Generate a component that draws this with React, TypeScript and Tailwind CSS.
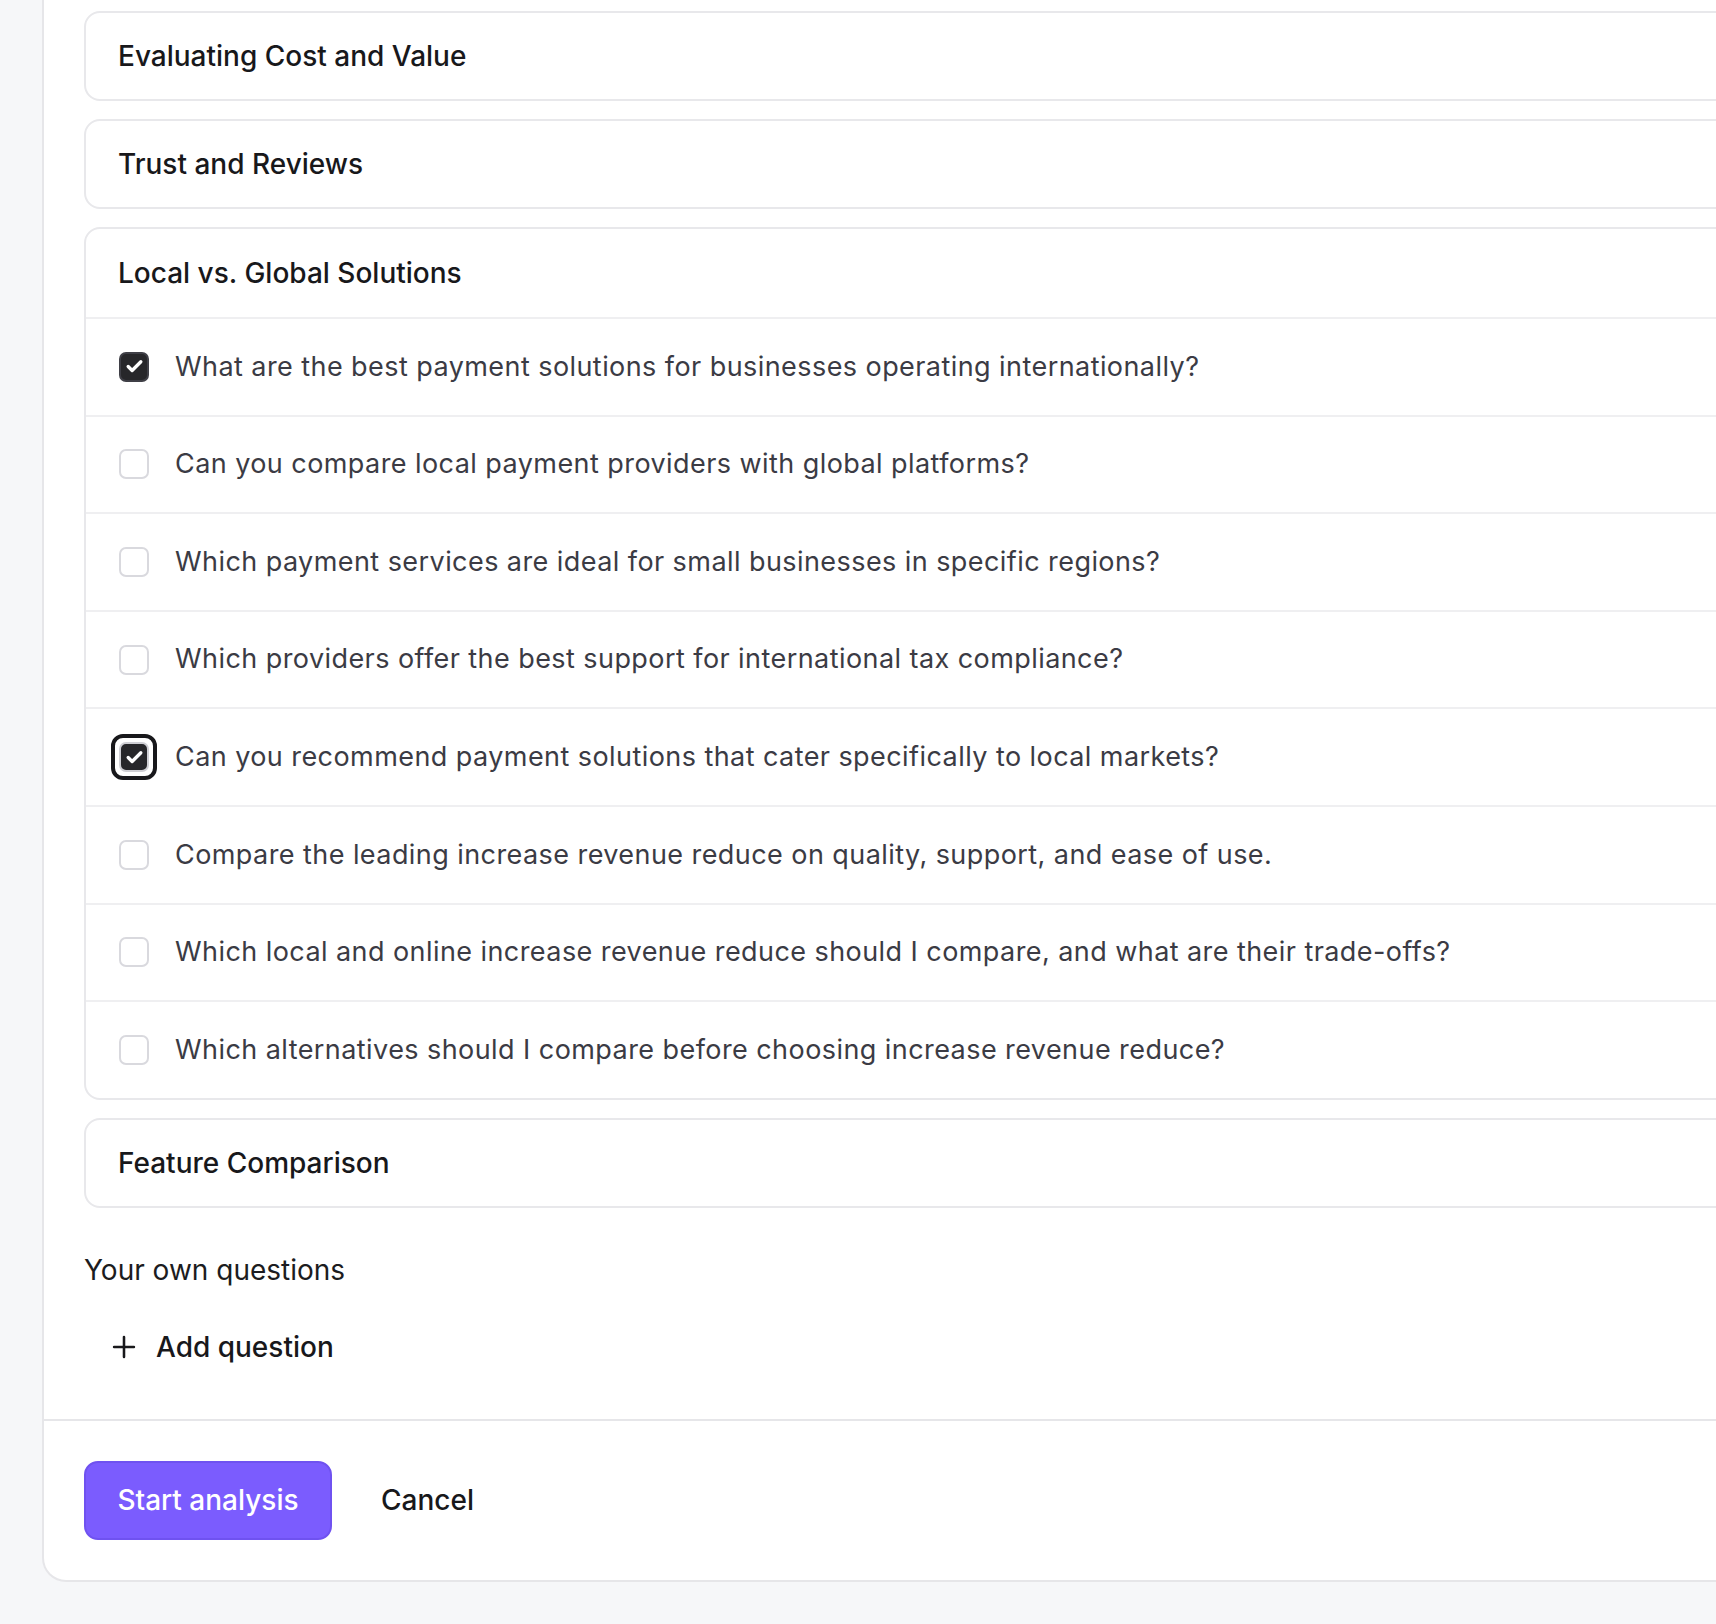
import { Check, Plus } from "lucide-react";

const questions = [
  { text: "What are the best payment solutions for businesses operating internationally?", checked: true },
  { text: "Can you compare local payment providers with global platforms?", checked: false },
  { text: "Which payment services are ideal for small businesses in specific regions?", checked: false },
  { text: "Which providers offer the best support for international tax compliance?", checked: false },
  { text: "Can you recommend payment solutions that cater specifically to local markets?", checked: true, focused: true },
  { text: "Compare the leading increase revenue reduce on quality, support, and ease of use.", checked: false },
  { text: "Which local and online increase revenue reduce should I compare, and what are their trade-offs?", checked: false },
  { text: "Which alternatives should I compare before choosing increase revenue reduce?", checked: false },
];

function Box({ checked, focused }: { checked: boolean; focused?: boolean }) {
  const box = (
    <span
      className={`flex h-[30px] w-[30px] shrink-0 items-center justify-center rounded-[7px] border-2 ${
        checked ? "border-[#3f3f46] bg-[#27272a]" : "border-[#d9d9de] bg-white"
      } ${focused ? "border-[#cfcfd4]" : ""}`}
    >
      {checked && <Check size={19} strokeWidth={4.2} className="text-white" />}
    </span>
  );
  if (!focused) return box;
  return (
    <span className="-m-[8px] flex shrink-0 rounded-[12px] border-[4px] border-[#18181b] p-[4px]">{box}</span>
  );
}

function Section({ title }: { title: string }) {
  return (
    <div className="flex h-[90px] items-center rounded-2xl border-2 border-[#e8e8eb] bg-white px-[32px]">
      <span className="text-[28px] font-medium text-[#18181b]">{title}</span>
    </div>
  );
}

export default function App() {
  return (
    <div
      className="min-h-[1624px] w-full overflow-hidden bg-[#f6f7f9]"
      style={{ fontFamily: "Inter, 'Noto Sans', sans-serif" }}
    >
      <div className="ml-[42px] w-[1780px] rounded-b-[24px] border-2 border-t-0 border-[#e6e6e9] bg-white">
        <div className="px-[40px] pt-[11px]">
          <div className="flex flex-col gap-[18px]">
            <Section title="Evaluating Cost and Value" />
            <Section title="Trust and Reviews" />

            {/* Open section */}
            <div className="rounded-2xl border-2 border-[#e8e8eb] bg-white">
              <div className="flex h-[88px] items-center px-[32px]">
                <span className="text-[28px] font-medium text-[#18181b]">Local vs. Global Solutions</span>
              </div>
              {questions.map((q) => (
                <label
                  key={q.text}
                  className="flex h-[97.6px] items-center gap-[26px] border-t-2 border-[#efeff1] px-[33px]"
                >
                  <Box checked={q.checked} focused={q.focused} />
                  <span className="text-[27px] tracking-[0.016em] text-[#3b3b44]">{q.text}</span>
                </label>
              ))}
            </div>

            <Section title="Feature Comparison" />
          </div>

          <h3 className="mt-[44px] text-[28px] leading-[36px] text-[#1c1c20]">Your own questions</h3>
          <button className="mt-[31px] flex h-[56px] items-center gap-[15px] pl-[23px] text-[28px] font-medium text-[#18181b]">
            <Plus size={34} strokeWidth={1.8} />
            Add question
          </button>
          <div className="h-[44px]" />
        </div>

        <div className="flex items-center gap-[49px] border-t-2 border-[#e6e6e9] px-[40px] pt-[40px] pb-[40px]">
          <button className="h-[79px] w-[248px] rounded-[14px] border-2 border-[#6f52f0] bg-[#7b5cfe] text-[28px] font-medium text-white">
            Start analysis
          </button>
          <button className="text-[28px] font-medium text-[#18181b]">Cancel</button>
        </div>
      </div>
    </div>
  );
}
